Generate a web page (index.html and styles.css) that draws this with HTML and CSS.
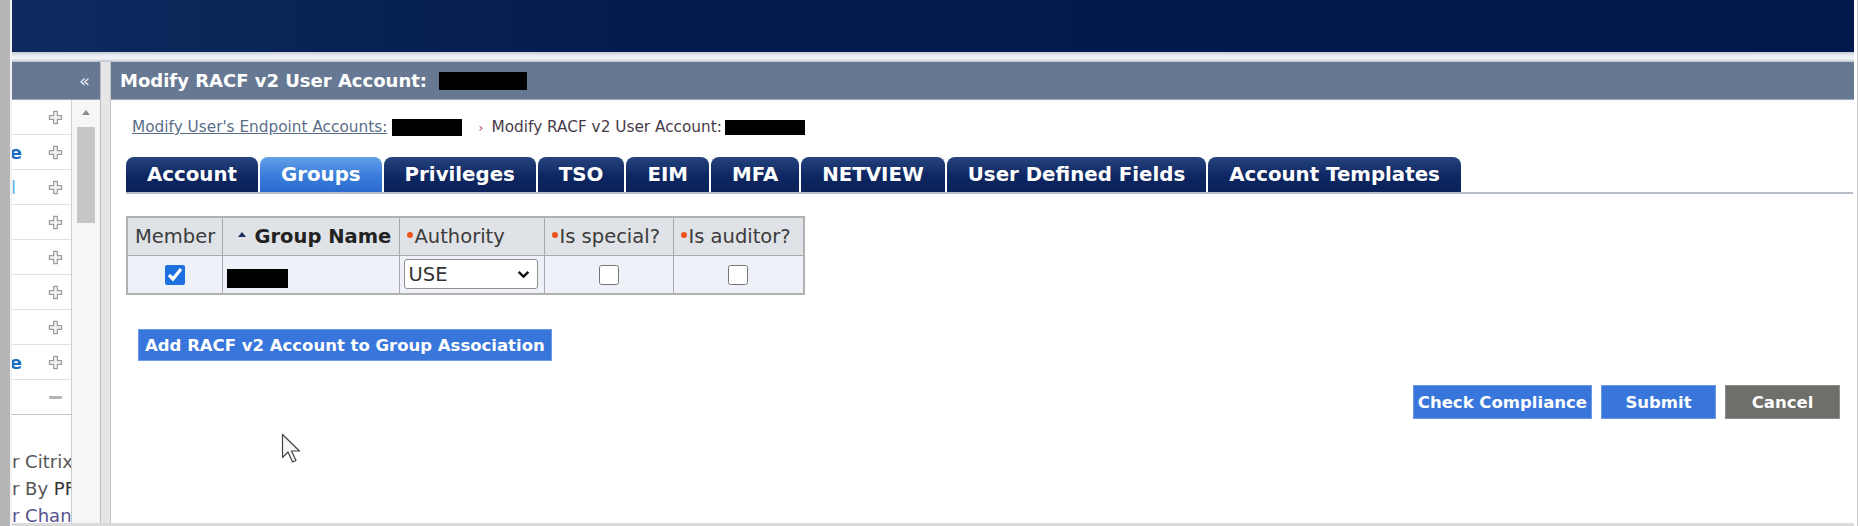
FILE: index.html
```html
<!DOCTYPE html>
<html lang="en">
<head>
    <meta charset="UTF-8">
    <meta name="viewport" content="width=device-width, initial-scale=1.0">
    <title>Modify RACF v2 User Account</title>
    <link rel="stylesheet" href="styles.css">
</head>
<body>
    <div class="frame">
        <div class="edge"></div>
        <div class="app">
            <div class="topbar"></div>
            <div class="strip"></div>
            <div class="workspace">
                <!-- Task list (scrolled / collapsed) -->
                <div class="sidebar">
                    <div class="side-head"><span class="collapse">&laquo;</span></div>
                    <div class="side-body">
                        <div class="side-list">
                            <div class="side-row"><span class="side-label"></span><svg viewBox="0 0 16 16"><path d="M6 1.5h4v4.5h4.5v4H10v4.5H6V10H1.5V6H6z"/></svg></div>
                            <div class="side-row"><span class="side-label">Manage Profile</span><svg viewBox="0 0 16 16"><path d="M6 1.5h4v4.5h4.5v4H10v4.5H6V10H1.5V6H6z"/></svg></div>
                            <div class="side-row"><span class="side-label narrow light">View Detail</span><svg viewBox="0 0 16 16"><path d="M6 1.5h4v4.5h4.5v4H10v4.5H6V10H1.5V6H6z"/></svg></div>
                            <div class="side-row"><span class="side-label"></span><svg viewBox="0 0 16 16"><path d="M6 1.5h4v4.5h4.5v4H10v4.5H6V10H1.5V6H6z"/></svg></div>
                            <div class="side-row"><span class="side-label"></span><svg viewBox="0 0 16 16"><path d="M6 1.5h4v4.5h4.5v4H10v4.5H6V10H1.5V6H6z"/></svg></div>
                            <div class="side-row"><span class="side-label"></span><svg viewBox="0 0 16 16"><path d="M6 1.5h4v4.5h4.5v4H10v4.5H6V10H1.5V6H6z"/></svg></div>
                            <div class="side-row"><span class="side-label"></span><svg viewBox="0 0 16 16"><path d="M6 1.5h4v4.5h4.5v4H10v4.5H6V10H1.5V6H6z"/></svg></div>
                            <div class="side-row"><span class="side-label">Create Profile</span><svg viewBox="0 0 16 16"><path d="M6 1.5h4v4.5h4.5v4H10v4.5H6V10H1.5V6H6z"/></svg></div>
                            <div class="side-row last"><span class="side-label"></span><svg viewBox="0 0 16 16"><rect class="minus" x="1" y="6.5" width="14" height="3" rx="1.5"/></svg></div>
                            <div class="side-tail">
                                <p>r Citrix_Access</p>
                                <p>r By <span class="dark">PFI</span></p>
                                <p class="visited">r Change</p>
                            </div>
                        </div>
                        <div class="scroll">
                            <span class="scroll-up"></span>
                            <span class="scroll-thumb"></span>
                        </div>
                    </div>
                </div>
                <div class="splitter"></div>

                <!-- Main panel -->
                <div class="main">
                    <div class="main-head">Modify RACF v2 User Account:<span class="redact"></span></div>
                    <div class="main-body">
                        <div class="crumbs">
                            <a href="#">Modify User's Endpoint Accounts:</a>
                            <span class="redact"></span>
                            <span class="crumb-sep">&rsaquo;</span>
                            <span>Modify RACF v2 User Account:</span>
                            <span class="redact short"></span>
                        </div>

                        <div class="tabs">
                            <div class="tab">Account</div>
                            <div class="tab active">Groups</div>
                            <div class="tab">Privileges</div>
                            <div class="tab">TSO</div>
                            <div class="tab">EIM</div>
                            <div class="tab">MFA</div>
                            <div class="tab">NETVIEW</div>
                            <div class="tab">User Defined Fields</div>
                            <div class="tab">Account Templates</div>
                        </div>

                        <table class="groups">
                            <colgroup>
                                <col class="c-member">
                                <col class="c-name">
                                <col class="c-auth">
                                <col class="c-special">
                                <col class="c-auditor">
                            </colgroup>
                            <tr>
                                <th>Member</th>
                                <th class="sorted"><span class="sort"></span>Group Name</th>
                                <th><span class="dot"></span>Authority</th>
                                <th><span class="dot"></span>Is special?</th>
                                <th><span class="dot"></span>Is auditor?</th>
                            </tr>
                            <tr>
                                <td class="center"><input type="checkbox" checked></td>
                                <td><span class="redact"></span></td>
                                <td>
                                    <span class="select-wrap">
                                        <select>
                                            <option>USE</option>
                                            <option>CREATE</option>
                                            <option>CONNECT</option>
                                            <option>JOIN</option>
                                        </select>
                                        <svg class="chevron" viewBox="0 0 12 8"><path d="M1.5 1.5l4.5 4.5 4.5-4.5"/></svg>
                                    </span>
                                </td>
                                <td class="center"><input type="checkbox"></td>
                                <td class="center"><input type="checkbox"></td>
                            </tr>
                        </table>

                        <div class="add-row">
                            <button class="button">Add RACF v2 Account to Group Association</button>
                        </div>

                        <div class="actions">
                            <button class="button">Check Compliance</button>
                            <button class="button">Submit</button>
                            <button class="button cancel">Cancel</button>
                        </div>
                    </div>
                </div>
            </div>
        </div>
        <div class="right-edge"></div>

        <!-- mouse pointer in the capture -->
        <svg class="cursor" viewBox="0 0 20 31"><path d="M1.5 1.5v23l5.5-5.5 4.5 10 3.5-1.5-4.5-9.5h8z"/></svg>
    </div>
</body>
</html>
```

FILE: styles.css
```css
* {
    box-sizing: border-box;
}
body {
    margin: 0;
    font-family: "DejaVu Sans", Verdana, sans-serif;
    background-color: #fff;
    color: #333;
}
.frame {
    display: flex;
    height: 526px;
    position: relative;
}
.edge {
    width: 12px;
    background-color: #b6b6b6;
    border-right: 2px solid #f2f2f2;
}
.app {
    flex: 1;
    min-width: 0;
    display: flex;
    flex-direction: column;
    border-bottom: 3px solid #dadada;
}
.right-edge {
    width: 3px;
    margin-left: 3px;
    border-left: 1px solid #cfcfcf;
}
.topbar {
    height: 52px;
    background: linear-gradient(90deg, #0e2a5e 0%, #041b4d 35%, #00184a 100%);
}
.strip {
    height: 10px;
    background: linear-gradient(#c3cad6, #eef1f5 40%, #eef1f5 70%, #b7bfcb);
}
.workspace {
    flex: 1;
    min-height: 0;
    display: flex;
}

/* Sidebar */
.sidebar {
    width: 88px;
    display: flex;
    flex-direction: column;
}
.side-head,
.main-head {
    height: 38px;
    background-color: #677892;
    border-bottom: 1px solid #97a3b6;
    display: flex;
    align-items: center;
}
.side-head {
    justify-content: flex-end;
    padding-right: 10px;
    color: #e1e6ee;
    font-size: 18px;
}
.side-body {
    flex: 1;
    min-height: 0;
    display: flex;
}
.side-list {
    width: 60px;
    overflow: hidden;
    background-color: #fff;
    border-right: 1px solid #cdcdcd;
}
.side-row {
    height: 35px;
    display: flex;
    align-items: center;
    justify-content: space-between;
    padding-right: 8px;
    border-bottom: 1px solid #e0e0e0;
}
.side-row.last {
    border-bottom-color: #c4c4c4;
}
.side-row svg {
    width: 15px;
    height: 15px;
}
.side-row path {
    fill: #f2f2f2;
    stroke: #9c9c9c;
    stroke-width: 1.3;
    stroke-linejoin: round;
}
.side-row .minus {
    fill: #b4b4b4;
}
.side-label {
    flex: 0 0 10px;
    display: flex;
    justify-content: flex-end;
    overflow: hidden;
    white-space: nowrap;
    font-size: 18px;
    font-weight: bold;
    color: #1b6bc2;
}
.side-label.narrow {
    flex-basis: 4px;
}
.side-label.light {
    color: #5ab4e4;
    font-weight: normal;
}
.side-tail {
    padding-top: 33px;
    font-size: 18px;
    line-height: 27px;
    color: #555;
    white-space: nowrap;
}
.side-tail p {
    margin: 0;
}
.side-tail .dark {
    color: #333;
}
.side-tail .visited {
    color: #58508e;
}
.scroll {
    flex: 1;
    background-color: #f6f6f6;
    display: flex;
    flex-direction: column;
    align-items: center;
    padding-top: 10px;
}
.scroll-up {
    width: 0;
    border-left: 4px solid transparent;
    border-right: 4px solid transparent;
    border-bottom: 5px solid #8a8a8a;
}
.scroll-thumb {
    width: 18px;
    height: 96px;
    margin-top: 12px;
    background-color: #c6c6c6;
}
.splitter {
    width: 11px;
    background-color: #e6e6e6;
    border-left: 1px solid #bdbdbd;
    border-right: 1px solid #c4c4c4;
}

/* Main panel */
.main {
    flex: 1;
    min-width: 0;
    display: flex;
    flex-direction: column;
}
.main-head {
    padding-left: 9px;
    color: #fff;
    font-size: 18px;
    font-weight: bold;
}
.redact {
    display: inline-block;
    background-color: #000;
}
.main-head .redact {
    width: 88px;
    height: 18px;
    margin-left: 12px;
}
.main-body {
    flex: 1;
    padding: 18px 1px 0 15px;
}
.crumbs {
    display: flex;
    align-items: center;
    height: 18px;
    margin-left: 6px;
    font-size: 15.3px;
    color: #48394a;
    white-space: nowrap;
}
.crumbs a {
    color: #5a6d88;
}
.crumbs .redact {
    width: 70px;
    height: 17px;
    margin-left: 5px;
}
.crumbs .redact.short {
    width: 80px;
    height: 15px;
    margin-left: 3px;
}
.crumb-sep {
    margin: 0 8px 0 16px;
    color: #b0506a;
    font-size: 13px;
}
.tabs {
    display: flex;
    gap: 2px;
    margin-top: 21px;
    border-bottom: 2px solid #b6bcc8;
}
.tab {
    height: 35px;
    padding: 0 21px;
    line-height: 35px;
    font-size: 19.8px;
    font-weight: bold;
    color: #fff;
    white-space: nowrap;
    border-radius: 8px 8px 0 0;
    background: linear-gradient(#26447f, #0e2762 55%, #0a2158);
}
.tab.active {
    background: linear-gradient(#62a0e8, #3c7fdb 50%, #2b6bd0);
}

/* Group membership table */
.groups {
    margin-top: 22px;
    width: 677px;
    table-layout: fixed;
    border-collapse: collapse;
    border: 2px solid #b1b1b1;
    font-size: 19.5px;
}
.c-member { width: 95px; }
.c-name { width: 177px; }
.c-auth { width: 145px; }
.c-special { width: 129px; }
.c-auditor { width: 131px; }
.groups th {
    height: 38px;
    padding: 0 0 0 7px;
    background-color: #dfe2e6;
    border: 1px solid #a9a9a9;
    font-weight: normal;
    text-align: left;
    color: #3b3b3b;
    white-space: nowrap;
}
.groups th.sorted {
    font-weight: bold;
    color: #222;
}
.groups td {
    height: 39px;
    padding: 0 0 0 4px;
    background-color: #eef1f7;
    border: 1px solid #a9a9a9;
}
.groups td.center {
    padding: 0;
    text-align: center;
}
.groups td .redact {
    width: 61px;
    height: 19px;
    vertical-align: middle;
    position: relative;
    top: 3px;
}
.sort {
    display: inline-block;
    width: 0;
    margin: 0 9px 0 8px;
    border-left: 4px solid transparent;
    border-right: 4px solid transparent;
    border-bottom: 5px solid #1b3060;
    vertical-align: middle;
    position: relative;
    top: -3px;
}
.dot {
    display: inline-block;
    width: 6px;
    height: 6px;
    margin-right: 2px;
    border-radius: 50%;
    background-color: #f0531c;
    vertical-align: middle;
    position: relative;
    top: -2px;
}
.groups input[type="checkbox"] {
    width: 20px;
    height: 20px;
    margin: 0;
    vertical-align: middle;
    accent-color: #1e6fe0;
}
.select-wrap {
    position: relative;
    display: inline-block;
    vertical-align: middle;
}
.groups select {
    display: block;
    width: 134px;
    height: 30px;
    padding-left: 4px;
    font-family: inherit;
    font-size: 19.5px;
    color: #333;
    background-color: #fff;
    border: 1px solid #8f8f8f;
    border-radius: 3px;
    appearance: none;
}
.chevron {
    position: absolute;
    right: 8px;
    top: 11px;
    width: 13px;
    height: 9px;
    pointer-events: none;
}
.chevron path {
    fill: none;
    stroke: #111;
    stroke-width: 2.2;
}

/* Buttons */
.button {
    height: 32px;
    padding: 0 6px;
    font-family: inherit;
    font-size: 16.5px;
    font-weight: bold;
    color: #fff;
    background-color: #3976dc;
    border: 1px solid #6d9ae6;
    cursor: pointer;
}
.add-row {
    display: flex;
    margin-top: 34px;
    padding-left: 12px;
}
.actions {
    display: flex;
    justify-content: flex-end;
    gap: 9px;
    margin-top: 24px;
    padding-right: 13px;
}
.actions .button {
    height: 34px;
    min-width: 115px;
    padding: 0 4px;
}
.button.cancel {
    background-color: #6e6e6a;
    border-color: #8c8c88;
}
.cursor {
    position: absolute;
    left: 281px;
    top: 433px;
    width: 20px;
    height: 31px;
}
.cursor path {
    fill: #f4f4f4;
    stroke: #444;
    stroke-width: 1.2;
    stroke-linejoin: round;
}
```
